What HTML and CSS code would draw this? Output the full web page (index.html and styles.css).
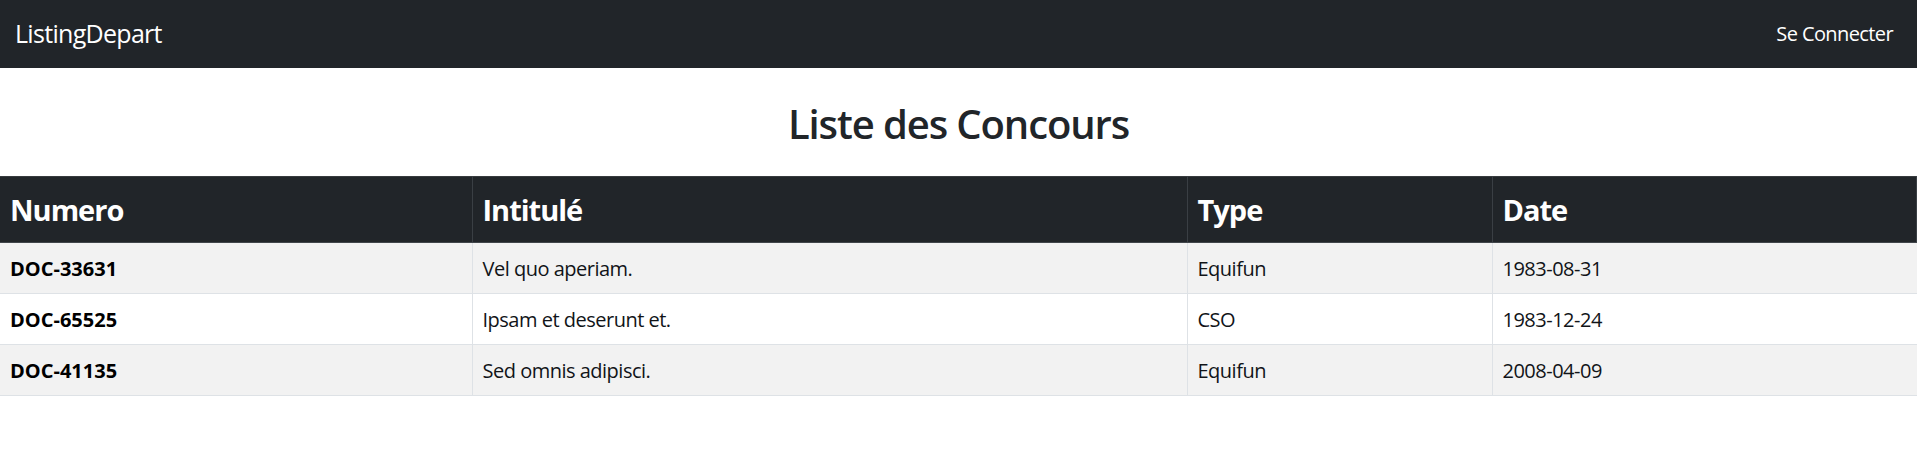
FILE: index.html
```html
<!DOCTYPE html>
<html lang="fr">
<head>
<meta charset="utf-8">
<title>ListingDepart</title>
<link rel="stylesheet" href="styles.css">
</head>
<body>
<nav class="navbar">
  <a class="brand" href="#">ListingDepart</a>
  <a class="nav-link" href="#">Se Connecter</a>
</nav>
<main>
  <h2 class="title">Liste des Concours</h2>
  <table class="list">
    <colgroup>
      <col class="c1">
      <col class="c2">
      <col class="c3">
      <col class="c4">
    </colgroup>
    <thead>
      <tr>
        <th><h4 class="th-title">Numero</h4></th>
        <th><h4 class="th-title">Intitulé</h4></th>
        <th><h4 class="th-title">Type</h4></th>
        <th><h4 class="th-title">Date</h4></th>
      </tr>
    </thead>
    <tbody>
      <tr class="odd">
        <td class="num">DOC-33631</td>
        <td>Vel quo aperiam.</td>
        <td>Equifun</td>
        <td>1983-08-31</td>
      </tr>
      <tr>
        <td class="num">DOC-65525</td>
        <td>Ipsam et deserunt et.</td>
        <td>CSO</td>
        <td>1983-12-24</td>
      </tr>
      <tr class="odd">
        <td class="num">DOC-41135</td>
        <td>Sed omnis adipisci.</td>
        <td>Equifun</td>
        <td>2008-04-09</td>
      </tr>
    </tbody>
  </table>
</main>
</body>
</html>
```
FILE: styles.css
```css
* { box-sizing: border-box; }
html, body { margin: 0; padding: 0; }
body {
  font-family: "Open Sans", "Noto Sans", sans-serif;
  font-size: 20px;
  line-height: 1.5;
  color: #212529;
  background: #fff;
}
.navbar {
  display: flex;
  align-items: center;
  justify-content: space-between;
  height: 68px;
  padding: 0 14px 0 15px;
  background: #212529;
}
.brand {
  font-size: 25px;
  line-height: 37.5px;
  color: #fff;
  text-decoration: none;
  letter-spacing: -0.7px;
}
.nav-link {
  font-size: 20px;
  line-height: 30px;
  padding: 0 10px;
  color: #fff;
  text-decoration: none;
  letter-spacing: -0.6px;
}
.title {
  margin: 32px 0 28px;
  text-align: center;
  font-size: 40px;
  line-height: 48px;
  font-weight: 600;
  letter-spacing: -1.1px;
}
.list {
  width: 100%;
  border-collapse: collapse;
  table-layout: fixed;
}
.c1 { width: 472px; }
.c2 { width: 715px; }
.c3 { width: 305px; }
.list th {
  background: #212529;
  color: #fff;
  text-align: left;
  padding: 15px 10px 14px;
  border-top: 1px solid #373b3e;
  border-bottom: 1px solid #41464b;
  border-right: 1px solid #3a3f44;
}
.th-title {
  margin: 0;
  font-size: 29px;
  line-height: 36px;
  font-weight: 700;
  letter-spacing: -1px;
}
.list td {
  padding: 11px 10px 9px;
  line-height: 30px;
  color: #111418;
  border-bottom: 1px solid #dee2e6;
  border-right: 1px solid #dee2e6;
  letter-spacing: -0.5px;
}
.list td:last-child { border-right: 0; }
.list tr.odd td { background: #f2f2f2; }
.list td.num { font-weight: 700; letter-spacing: 0; color: #000; }
```
